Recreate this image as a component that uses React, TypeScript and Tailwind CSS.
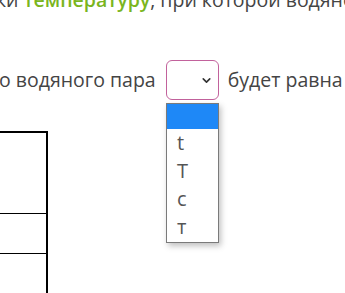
import React from 'react';
import { ChevronDown } from 'lucide-react';

const options = ['t', 'T', 'c', 'т'];

const App = () => {
  return (
    <div
      className="relative w-[345px] h-[293px] overflow-hidden bg-white text-[#444]"
      style={{ fontFamily: '"Open Sans", sans-serif' }}
    >
      <p className="-mt-[15px] -ml-[4px] whitespace-nowrap text-[19.5px] leading-[30px]">
        ки <span className="font-semibold text-[#7ab51d]">температуру</span>, при которой водяного пара
      </p>

      <div className="mt-[45px] flex items-center whitespace-nowrap text-[19.5px] leading-[30px]">
        <span className="-ml-[1px]">о водяного пара</span>
        <div className="ml-[10px] flex h-[40px] w-[53px] shrink-0 items-center justify-end rounded-[6px] border border-[#c2629c] pr-[5px]">
          <ChevronDown size={13} strokeWidth={3} className="text-[#333]" />
        </div>
        <span className="ml-[9px]">будет равна</span>
      </div>

      <div className="mt-[31px] w-[48px] border-t-2 border-r-2 border-black">
        <div className="h-[81px] border-b border-black" />
        <div className="h-[40px] border-b border-black" />
        <div className="h-[40px]" />
      </div>

      <div className="absolute left-[166px] top-[103px] w-[53px] border border-[#7a7a7a] bg-white shadow-[2px_3px_6px_rgba(0,0,0,0.25)]">
        <div className="h-[25px] bg-[#1e88f7]" />
        {options.map((o) => (
          <div key={o} className="h-[28px] pl-[10px] text-[20px] leading-[28px] text-[#555]">
            {o}
          </div>
        ))}
        <div className="h-[1px]" />
      </div>
    </div>
  );
};

export default App;
